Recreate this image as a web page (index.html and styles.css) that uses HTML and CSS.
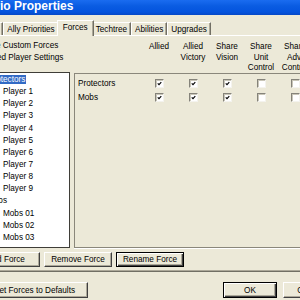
FILE: index.html
```html
<!DOCTYPE html>
<html lang="en">
<head>
  <meta charset="UTF-8">
  <meta name="viewport" content="width=device-width, initial-scale=1.0">
  <title>Scenario Properties</title>
  <link rel="stylesheet" href="styles.css">
</head>
<body>
  <div class="window">
    <div class="titlebar">Scenario Properties</div>

    <div class="content">
      <div class="tabs">
        <div class="tab">Players</div>
        <div class="tab">Ally Priorities</div>
        <div class="tab active">Forces</div>
        <div class="tab">Techtree</div>
        <div class="tab">Abilities</div>
        <div class="tab">Upgrades</div>
      </div>

      <div class="panel">
        <div class="top">
          <div class="options">
            <div class="option"><span class="check"><svg viewBox="0 0 7 7"><path d="M1 3.2l1.8 1.8L6 1.6"/></svg></span>Use Custom Forces</div>
            <div class="option"><span class="check"><svg viewBox="0 0 7 7"><path d="M1 3.2l1.8 1.8L6 1.6"/></svg></span>Fixed Player Settings</div>
          </div>
          <div class="cols heads">
            <div></div>
            <div>Allied</div>
            <div>Allied<br>Victory</div>
            <div>Share<br>Vision</div>
            <div>Share<br>Unit<br>Control</div>
            <div>Share<br>Adv.<br>Control</div>
          </div>
        </div>

        <div class="main">
          <div class="tree">
            <div class="node"><span class="selected">Protectors</span></div>
            <div class="node child">Player 1</div>
            <div class="node child">Player 2</div>
            <div class="node child">Player 3</div>
            <div class="node child">Player 4</div>
            <div class="node child">Player 5</div>
            <div class="node child">Player 6</div>
            <div class="node child">Player 7</div>
            <div class="node child">Player 8</div>
            <div class="node child">Player 9</div>
            <div class="node">Mobs</div>
            <div class="node child">Mobs 01</div>
            <div class="node child">Mobs 02</div>
            <div class="node child">Mobs 03</div>
          </div>

          <div class="grid">
            <div class="cols row">
              <div class="name">Protectors</div>
              <div><span class="check"><svg viewBox="0 0 7 7"><path d="M1 3.2l1.8 1.8L6 1.6"/></svg></span></div>
              <div><span class="check"><svg viewBox="0 0 7 7"><path d="M1 3.2l1.8 1.8L6 1.6"/></svg></span></div>
              <div><span class="check"><svg viewBox="0 0 7 7"><path d="M1 3.2l1.8 1.8L6 1.6"/></svg></span></div>
              <div><span class="check"></span></div>
              <div><span class="check"></span></div>
            </div>
            <div class="cols row">
              <div class="name">Mobs</div>
              <div><span class="check"><svg viewBox="0 0 7 7"><path d="M1 3.2l1.8 1.8L6 1.6"/></svg></span></div>
              <div><span class="check"><svg viewBox="0 0 7 7"><path d="M1 3.2l1.8 1.8L6 1.6"/></svg></span></div>
              <div><span class="check"><svg viewBox="0 0 7 7"><path d="M1 3.2l1.8 1.8L6 1.6"/></svg></span></div>
              <div><span class="check"></span></div>
              <div><span class="check"></span></div>
            </div>
          </div>
        </div>

        <div class="actions">
          <button>Add Force</button>
          <button>Remove Force</button>
          <button class="default">Rename Force</button>
        </div>
      </div>

      <div class="footer">
        <button class="reset">Reset Forces to Defaults</button>
        <button class="default ok">OK</button>
        <button class="cancel">Cancel</button>
      </div>
    </div>
  </div>
</body>
</html>
```

FILE: styles.css
```css
* {
  box-sizing: border-box;
}
html, body {
  margin: 0;
  overflow: hidden;
}
body {
  width: 300px;
  height: 300px;
  background: #ece9d8;
  font-family: "Liberation Sans", Arial, sans-serif;
  font-size: 8.2px;
  color: #000;
}
.window {
  width: 400px;
  margin-left: -44px;
}
.titlebar {
  height: 15px;
  padding-left: 4px;
  line-height: 13px;
  font-size: 12px;
  font-weight: bold;
  color: #fff;
  white-space: nowrap;
  background: linear-gradient(to bottom, #1a6cf0 0%, #0a5ce2 40%, #0454de 80%, #0649c6 100%);
}
.content {
  padding: 5px 6px 0;
}

/* tabs */
.tabs {
  display: flex;
  align-items: flex-end;
  height: 15px;
  padding-left: 6px;
}
.tab {
  height: 13px;
  padding: 2px 3px 0;
  line-height: 9px;
  white-space: nowrap;
  border-top: 1px solid #fff;
  border-left: 1px solid #fff;
  border-right: 1px solid #716f64;
  box-shadow: inset -1px 0 #aca899;
}
.tab.active {
  position: relative;
  z-index: 1;
  height: 16px;
  margin: 0 -2px -1px;
  padding: 2px 5px 0;
  background: #ece9d8;
}

/* tab page */
.panel {
  padding: 0 9px 3px;
  border-top: 1px solid #fff;
  border-left: 1px solid #fff;
  border-right: 1px solid #716f64;
  border-bottom: 1px solid #aca899;
  box-shadow: 0 1px #716f64;
}
.top {
  display: flex;
  height: 36px;
}
.options {
  width: 102px;
  padding-top: 4px;
  line-height: 12px;
  white-space: nowrap;
}
.option .check {
  margin-right: 5px;
  vertical-align: -1px;
}
.cols {
  display: grid;
  grid-template-columns: 67px repeat(5, 34px);
  align-items: center;
}
.heads {
  margin-left: 1px;
  padding-top: 6px;
  align-items: start;
  line-height: 10.5px;
  text-align: center;
}

.check {
  display: inline-block;
  width: 9px;
  height: 9px;
  padding: 1px;
  background: #fff;
  border: 1px solid;
  border-color: #85837a #f4f3ee #f4f3ee #85837a;
  box-shadow: inset 1px 1px #c9c6b8;
}
.check svg {
  display: block;
  width: 5px;
  height: 5px;
  fill: none;
  stroke: #000;
  stroke-width: 1.6;
}

.main {
  display: flex;
  gap: 4px;
  height: 176px;
}
.tree {
  width: 98px;
  padding-top: 1px;
  background: #fff;
  border: 1px solid #3f3e38;
  white-space: nowrap;
  overflow: hidden;
}
.node {
  height: 12.15px;
  line-height: 12.15px;
  padding-left: 14px;
}
.node.child {
  padding-left: 30px;
}
.selected {
  padding: 0 1px;
  background: #316ac5;
  color: #fff;
}
.grid {
  flex: 1;
  margin-top: 1px;
  padding-top: 2px;
  border: 1px solid #8a877b;
  box-shadow: 0 1px #fff;
}
.row {
  height: 14.5px;
}
.row .name {
  padding-left: 3px;
}
.row .check {
  justify-self: center;
  display: block;
  margin: 0 auto;
}

/* buttons */
button {
  height: 15px;
  padding: 0;
  font: inherit;
  color: #000;
  background: #ece9d8;
  border: 1px solid;
  border-color: #fff #404040 #404040 #fff;
  box-shadow: inset -1px -1px #aca899;
}
button.default {
  border: 1px solid #000;
  box-shadow: inset 1px 1px #fff, inset -1px -1px #404040, inset -2px -2px #aca899;
}
.actions {
  display: flex;
  gap: 4px;
  margin-top: 4px;
}
.actions button {
  width: 68px;
}
.footer {
  display: flex;
  gap: 6px;
  padding: 11px 13px 0 10px;
}
.footer button {
  height: 16px;
}
.reset {
  width: 116px;
}
.ok {
  margin-left: auto;
}
.ok, .cancel {
  width: 54px;
}
```
